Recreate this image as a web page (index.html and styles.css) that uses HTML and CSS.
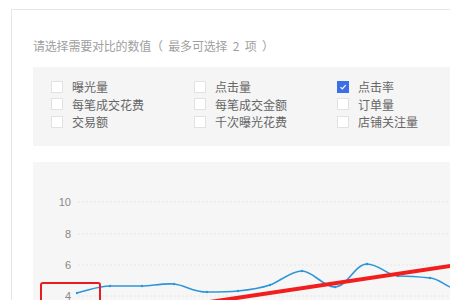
FILE: index.html
```html
<!DOCTYPE html>
<html lang="zh-CN">
<head>
    <meta charset="UTF-8">
    <title>数据对比</title>
    <link rel="stylesheet" href="styles.css">
</head>
<body>
    <div class="panel">
        <p class="tip">请选择需要对比的数值（ 最多可选择 2 项 ）</p>
        <div class="options">
            <label class="option"><span class="box"></span>曝光量</label>
            <label class="option"><span class="box"></span>点击量</label>
            <label class="option"><span class="box checked"><svg viewBox="0 0 12 12"><path d="M3 6.2 L5.2 8.4 L9.2 3.8" fill="none" stroke="#fff" stroke-width="1.4"/></svg></span>点击率</label>
            <label class="option"><span class="box"></span>每笔成交花费</label>
            <label class="option"><span class="box"></span>每笔成交金额</label>
            <label class="option"><span class="box"></span>订单量</label>
            <label class="option"><span class="box"></span>交易额</label>
            <label class="option"><span class="box"></span>千次曝光花费</label>
            <label class="option"><span class="box"></span>店铺关注量</label>
        </div>
        <div class="chart">
            <svg class="plot" width="417" height="160" viewBox="0 0 417 160">
                <g class="grid">
                    <line x1="45" y1="40" x2="417" y2="40"/>
                    <line x1="45" y1="72" x2="417" y2="72"/>
                    <line x1="45" y1="103" x2="417" y2="103"/>
                    <line x1="45" y1="134" x2="417" y2="134"/>
                </g>
                <g class="axis">
                    <text x="38" y="44">10</text>
                    <text x="38" y="76">8</text>
                    <text x="38" y="107">6</text>
                    <text x="38" y="138">4</text>
                </g>
                <path class="series" d="M44,131 C60,127 66,124 77,124 S100,124 109,124 S130,121 141,122 S160,130 174,130 S195,130 205,129 S228,126 237,123 S258,109 269,109 S290,125 302,125 S322,102 334,102 S355,114 365,114 S388,115 397,116 S410,122 417,125"/>
                <g class="dots">
                    <circle cx="44" cy="131" r="1.2"/>
                    <circle cx="77" cy="124" r="1.2"/>
                    <circle cx="109" cy="124" r="1.2"/>
                    <circle cx="141" cy="122" r="1.2"/>
                    <circle cx="174" cy="130" r="1.2"/>
                    <circle cx="205" cy="129" r="1.2"/>
                    <circle cx="237" cy="123" r="1.2"/>
                    <circle cx="269" cy="109" r="1.2"/>
                    <circle cx="302" cy="125" r="1.2"/>
                    <circle cx="334" cy="102" r="1.2"/>
                    <circle cx="365" cy="114" r="1.2"/>
                    <circle cx="397" cy="116" r="1.2"/>
                </g>
                <line class="mark-line" x1="150" y1="144" x2="430" y2="102"/>
                <rect class="mark-box" x="8" y="121" width="59" height="40" rx="2"/>
            </svg>
        </div>
    </div>
</body>
</html>
```

FILE: styles.css
```css
* {
    margin: 0;
    padding: 0;
    box-sizing: border-box;
}
body {
    font-family: "Noto Sans CJK SC", "Noto Sans", sans-serif;
    background: #fff;
    width: 450px;
    height: 300px;
    overflow: hidden;
}
.panel {
    margin: 9px 0 0 11px;
    border-top: 1px solid #e6e6e6;
    border-left: 1px solid #e6e6e6;
    padding: 0 0 0 21px;
    height: 400px;
}
.tip {
    color: #a0a0a0;
    font-size: 12px;
    line-height: 18px;
    padding-top: 27px;
    margin-bottom: 12px;
    letter-spacing: -0.2px;
    word-spacing: 3px;
}
.options {
    background: #f5f5f5;
    display: grid;
    grid-template-columns: repeat(3, 143px);
    grid-auto-rows: 17.5px;
    padding: 11px 0 15px 18px;
}
.option {
    display: flex;
    align-items: center;
    font-size: 12px;
    color: #666;
}
.box {
    width: 12px;
    height: 12px;
    background: #fff;
    border: 1px solid #e2e2e2;
    margin-right: 9px;
    display: flex;
}
.box.checked {
    background: #3b6fe6;
    border-color: #3b6fe6;
}
.box svg {
    width: 10px;
    height: 10px;
}
.chart {
    background: #f6f6f6;
    margin-top: 16px;
    height: 200px;
}
.plot {
    display: block;
}
.grid line {
    stroke: #e6e6e6;
    stroke-width: 1;
    stroke-dasharray: 2 2;
}
.axis text {
    font-family: "Liberation Sans", Arial, sans-serif;
    font-size: 11px;
    fill: #888;
    text-anchor: end;
}
.series {
    fill: none;
    stroke: #2e96d8;
    stroke-width: 1.6;
}
.dots circle {
    fill: #2e96d8;
}
.mark-line {
    stroke: #f21d1d;
    stroke-width: 4;
}
.mark-box {
    fill: none;
    stroke: #e81c1c;
    stroke-width: 2;
}
```
